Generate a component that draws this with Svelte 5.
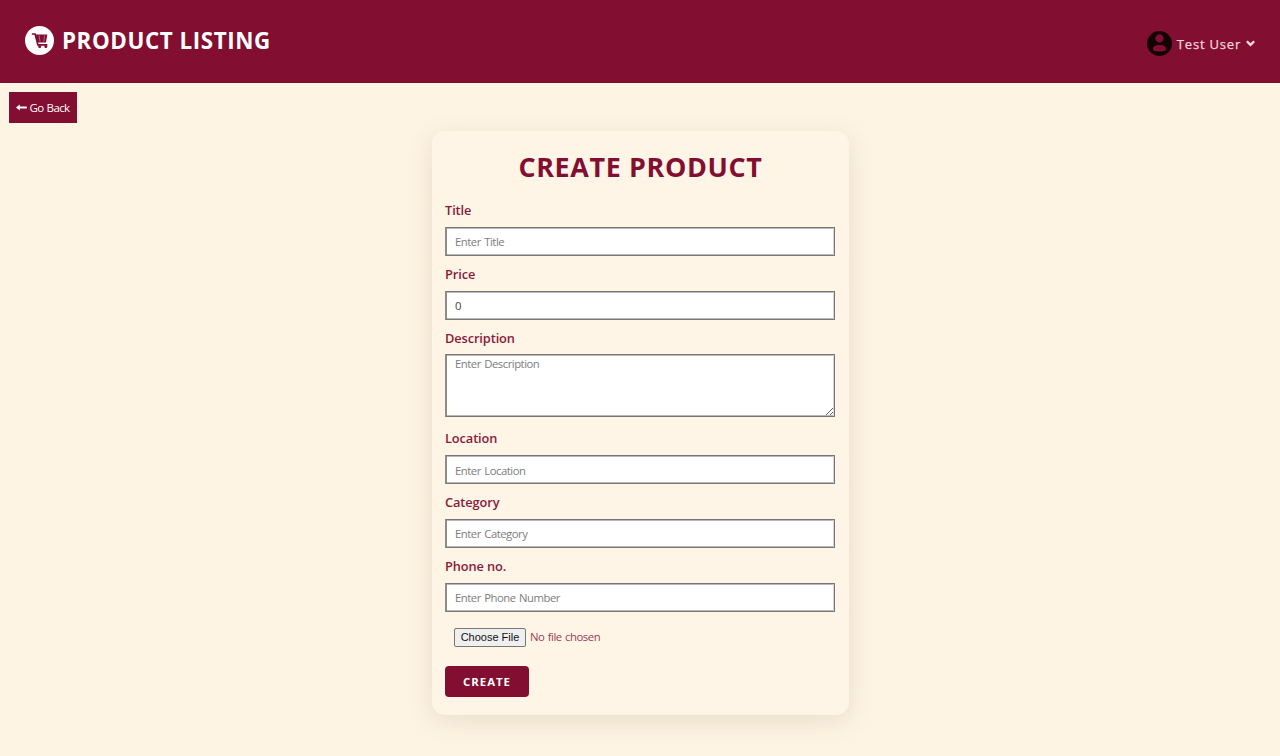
<script>
  let title = $state('');
  let price = $state('0');
  let description = $state('');
  let location = $state('');
  let category = $state('');
  let phone = $state('');
</script>

<header>
  <div class="brand">
    <svg class="logo" viewBox="0 0 29 29" aria-hidden="true">
      <circle cx="14.5" cy="14.5" r="14.5" fill="#fff" />
      <path d="M6.8 8H10.1L12.9 18.8H22.4" fill="none" stroke="#820e31" stroke-width="1.7" />
      <path d="M10.5 8.4H22.3L21 16.5H12.4Z" fill="#820e31" />
      <path d="M14.1 9.4L15 15.6M19.6 9.4L18.9 15.6" stroke="#c58a9b" stroke-width=".7" />
      <circle cx="14.7" cy="20.6" r="1.5" fill="#820e31" />
      <circle cx="20.8" cy="20.6" r="1.5" fill="#820e31" />
    </svg>
    <span class="brand-name">PRODUCT LISTING</span>
  </div>
  <div class="user">
    <svg class="avatar" viewBox="2 2 20 20" aria-hidden="true">
      <path fill="#120006" fill-rule="evenodd" d="M12 2a10 10 0 1 0 0 20a10 10 0 0 0 0-20zM12 4.6a3.3 3.3 0 1 1 0 6.6a3.3 3.3 0 0 1 0-6.6zM6.8 16.7c0-2.7 2-3.6 5.2-3.6s5.2.9 5.2 3.6c0 1.3-2.3 1.6-5.2 1.6s-5.2-.3-5.2-1.6z" />
    </svg>
    <span class="user-name">Test User</span>
    <svg class="chevron" viewBox="0 0 9 7" aria-hidden="true"><path d="M.8 1.2L4.5 4.9L8.2 1.2" fill="none" stroke="#fbdfe3" stroke-width="2.3" /></svg>
  </div>
</header>

<main>
  <button class="back" type="button">
    <svg viewBox="0 0 11 7" aria-hidden="true"><path d="M0 3.5L3.8 .5V2.4H10.2Q11 2.4 11 3.5Q11 4.6 10.2 4.6H3.8V6.5Z" fill="#fff" /></svg>
    <span>Go Back</span>
  </button>

  <form class="card">
    <h1>CREATE PRODUCT</h1>
    <label for="title">Title</label>
    <input id="title" class="field" placeholder="Enter Title" bind:value={title} />
    <label for="price">Price</label>
    <input id="price" class="field" bind:value={price} />
    <label for="description">Description</label>
    <textarea id="description" class="field" placeholder="Enter Description" bind:value={description}></textarea>
    <label for="location">Location</label>
    <input id="location" class="field" placeholder="Enter Location" bind:value={location} />
    <label for="category">Category</label>
    <input id="category" class="field" placeholder="Enter Category" bind:value={category} />
    <label for="phone">Phone no.</label>
    <input id="phone" class="field" placeholder="Enter Phone Number" bind:value={phone} />
    <div class="file">
      <button type="button" class="choose">Choose File</button>
      <span>No file chosen</span>
    </div>
    <button class="create" type="button">CREATE</button>
  </form>
</main>

<style>
  :global(body) {
    background: #fef4e3;
    font-family: 'Open Sans', 'Noto Sans', sans-serif;
  }
  header {
    height: 83px;
    box-sizing: border-box;
    padding: 0 25px;
    background: #820e31;
    display: flex;
    align-items: center;
    justify-content: space-between;
  }
  .brand { display: flex; align-items: center; gap: 8px; padding-bottom: 2px; }
  .logo { width: 29px; height: 29px; }
  .brand-name { color: #fff; font-size: 22.4px; line-height: 30px; font-weight: 700; letter-spacing: 0.55px; white-space: nowrap; }
  .user { display: flex; align-items: center; padding-top: 4px; }
  .avatar { width: 25px; height: 25px; margin-right: 5px; }
  .user-name { color: #f6d3dc; font-size: 13px; line-height: 20px; font-weight: 500; letter-spacing: 0.8px; white-space: nowrap; -webkit-text-stroke: 0.25px #f6d3dc; }
  .chevron { width: 9px; height: 7px; margin-left: 5px; }
  main { padding: 9px 0 41px; }
  button { font-family: inherit; cursor: pointer; }
  .back {
    display: flex;
    align-items: center;
    gap: 2.5px;
    width: 68px;
    height: 31px;
    margin-left: 9px;
    padding: 0 0 0 7px;
    border: 0;
    background: #820e31;
    color: #fff;
    font-size: 11.5px;
    letter-spacing: -0.6px;
    word-spacing: 0.6px;
    white-space: nowrap;
  }
  .back svg { width: 11px; height: 7px; flex: none; }
  .card {
    box-sizing: border-box;
    width: 417px;
    height: 584px;
    margin: 8px 0 0 432px;
    padding: 18px 13px 0;
    border-radius: 13px;
    background: #fff5e6;
    box-shadow: 0 6px 26px rgba(90, 75, 30, 0.13);
    display: flex;
    flex-direction: column;
  }
  h1 {
    margin: 0 0 14px;
    color: #820e31;
    font-size: 26.9px;
    line-height: 36px;
    font-weight: 700;
    letter-spacing: 0.65px;
    text-align: center;
  }
  label { color: #8a1a3b; font-size: 12.8px; line-height: 22.8px; font-weight: 600; letter-spacing: -0.1px; margin-bottom: 5px; }
  .field {
    box-sizing: border-box;
    width: 390px;
    height: 29px;
    flex: none;
    margin: 0 0 7px;
    padding: 1px 8px 0;
    border: 1px solid #767676;
    border-left: 2px solid #8f8c88;
    border-radius: 0;
    background: #fff;
    color: #444;
    outline: 0;
    font: 11.3px/16px 'Open Sans', 'Noto Sans', sans-serif;
    letter-spacing: -0.48px;
    word-spacing: 1px;
    box-shadow: inset -1px 0 #d5d4d2, inset 0 1px #bbb9b6, inset 0 -1px #bbb9b6;
  }
  .field::placeholder { color: #7d7d7d; }
  textarea.field { height: 63px; margin-bottom: 10px; resize: vertical; }
  .file { display: flex; align-items: center; height: 19px; margin: 9px 0 19px 9px; gap: 4px; font-size: 11.3px; letter-spacing: -0.43px; word-spacing: 0.7px; color: #9b3a55; }
  .file span { padding-bottom: 2px; }
  .choose {
    box-sizing: border-box;
    width: 72px;
    height: 19px;
    padding: 0;
    border: 1px solid #767676;
    border-radius: 2px;
    background: #efefef;
    color: #111;
    font: 11px 'Liberation Sans', Arial, sans-serif;
    letter-spacing: 0;
    white-space: nowrap;
  }
  .create {
    width: 84px;
    height: 31px;
    padding: 0;
    border: 0;
    border-radius: 4px;
    background: #820e31;
    color: #fff;
    font-size: 11.4px;
    font-weight: 700;
    letter-spacing: 1px;
  }
</style>
